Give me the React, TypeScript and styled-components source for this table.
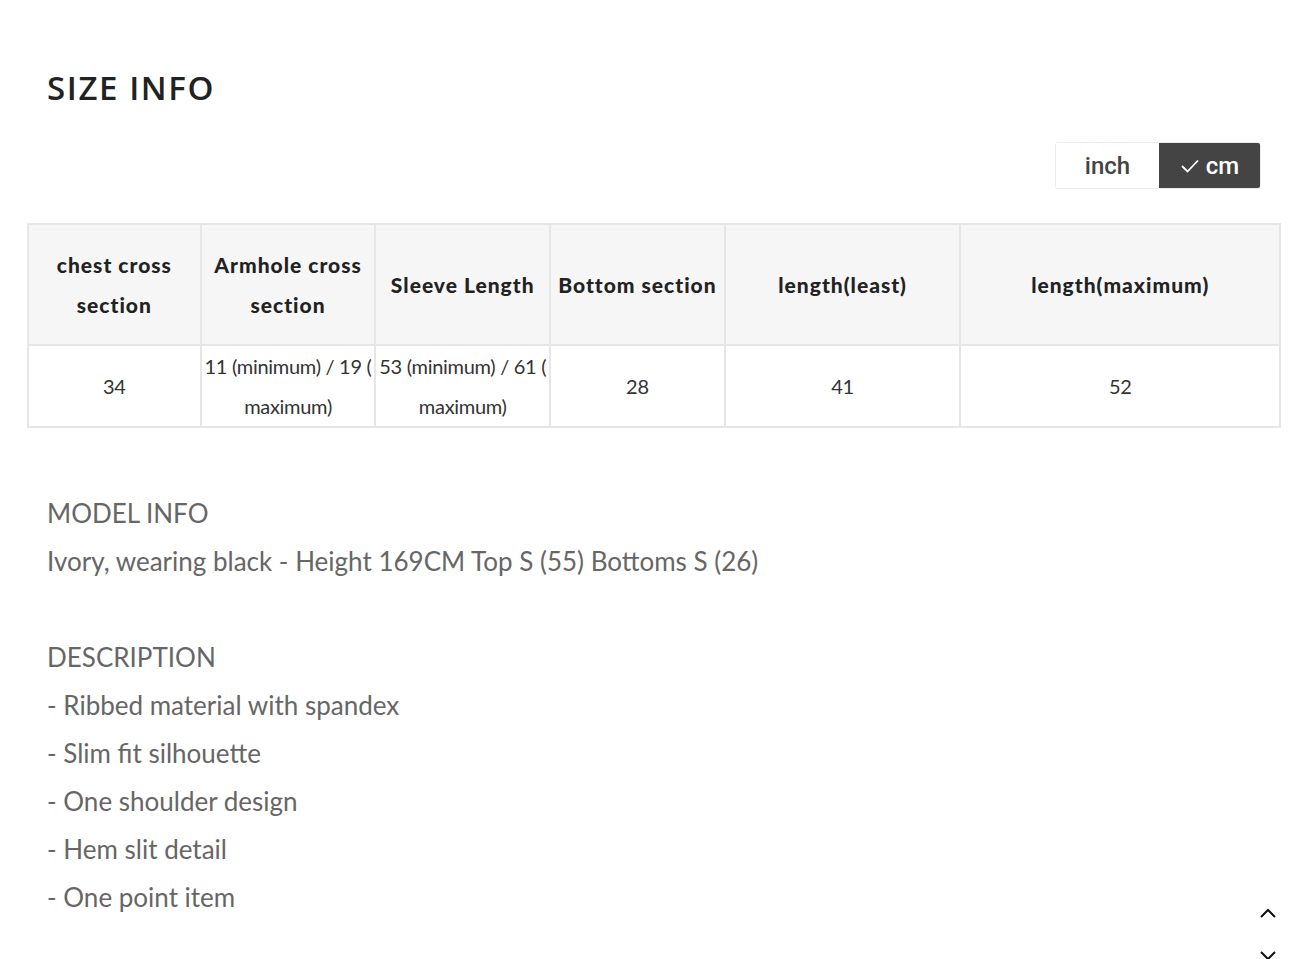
import { useState } from 'react'
import styled, { createGlobalStyle } from 'styled-components'

const GlobalStyle = createGlobalStyle`
  html, body {
    margin: 0;
    padding: 0;
    background: #fff;
  }
  body {
    font-family: Lato, 'Noto Sans', sans-serif;
  }
`

const Page = styled.div`
  padding: 66px 27px 40px 27px;
`

const Title = styled.h2`
  margin: 0 0 0 20px;
  font-family: 'Open Sans', 'Noto Sans', sans-serif;
  font-weight: 600;
  font-size: 33px;
  line-height: 44px;
  letter-spacing: 1.6px;
  color: #222;
`

const UnitBar = styled.div`
  display: flex;
  justify-content: flex-end;
  margin: 32px 20px 34px 0;
`

const UnitGroup = styled.div`
  display: flex;
  border: 1px solid #ececec;
  border-radius: 3px;
  overflow: hidden;
`

const UnitButton = styled.button<{ $active: boolean }>`
  display: flex;
  align-items: center;
  justify-content: center;
  gap: 6px;
  width: ${(p) => (p.$active ? '101px' : '103px')};
  height: 45px;
  border: none;
  padding: 0;
  font-family: Roboto, 'Liberation Sans', sans-serif;
  font-size: 24px;
  font-weight: 500;
  background: ${(p) => (p.$active ? '#444' : '#fff')};
  color: ${(p) => (p.$active ? '#fff' : '#444')};
  cursor: pointer;
`

const Table = styled.table`
  border-collapse: collapse;
  table-layout: fixed;
  border: 2px solid #e6e6e6;
`

const HeadCell = styled.th<{ $w: number }>`
  width: ${(p) => p.$w}px;
  height: 119px;
  padding: 0;
  background: #f6f6f6;
  border: 2px solid #e6e6e6;
  font-family: Lato, sans-serif;
  font-weight: 900;
  font-size: 21px;
  line-height: 40px;
  letter-spacing: 1px;
  color: #222;
  text-align: center;
  vertical-align: middle;
`

const Cell = styled.td`
  height: 78px;
  padding: 0;
  border: 2px solid #e6e6e6;
  font-size: 20px;
  line-height: 40px;
  letter-spacing: -0.3px;
  color: #333;
  text-align: center;
  vertical-align: middle;
  line-break: anywhere;
`

const Info = styled.div`
  margin: 61px 0 0 20px;
  font-size: 26px;
  line-height: 48px;
  color: #666;
`

const Line = styled.p<{ $gap?: boolean }>`
  margin: ${(p) => (p.$gap ? '48px 0 0' : '0')};
`

const ScrollNav = styled.div`
  position: fixed;
  right: 30px;
  top: 905px;
  display: flex;
  flex-direction: column;
  gap: 27px;
`

const ScrollButton = styled.button`
  width: 20px;
  height: 16px;
  padding: 0;
  border: none;
  background: transparent;
  display: flex;
  align-items: center;
  justify-content: center;
  cursor: pointer;
`

const columns = [
  { label: ['chest cross', 'section'], w: 171 },
  { label: ['Armhole cross', 'section'], w: 173 },
  { label: ['Sleeve Length'], w: 173 },
  { label: ['Bottom section'], w: 173 },
  { label: ['length(least)'], w: 234 },
  { label: ['length(maximum)'], w: 318 }
]

const values = ['34', '11 (minimum) / 19 (maximum)', '53 (minimum) / 61 (maximum)', '28', '41', '52']

const description = [
  '- Ribbed material with spandex',
  '- Slim fit silhouette',
  '- One shoulder design',
  '- Hem slit detail',
  '- One point item'
]

const App = () => {
  const [unit, setUnit] = useState<'inch' | 'cm'>('cm')

  return (
    <Page>
      <GlobalStyle />
      <Title>SIZE INFO</Title>
      <UnitBar>
        <UnitGroup>
          <UnitButton $active={unit === 'inch'} onClick={() => setUnit('inch')}>
            {unit === 'inch' && <Check />}
            inch
          </UnitButton>
          <UnitButton $active={unit === 'cm'} onClick={() => setUnit('cm')}>
            {unit === 'cm' && <Check />}
            cm
          </UnitButton>
        </UnitGroup>
      </UnitBar>
      <Table>
        <thead>
          <tr>
            {columns.map((c) => (
              <HeadCell key={c.label.join(' ')} $w={c.w}>
                {c.label.map((l, i) => (
                  <span key={l}>
                    {i > 0 && <br />}
                    {l}
                  </span>
                ))}
              </HeadCell>
            ))}
          </tr>
        </thead>
        <tbody>
          <tr>
            {values.map((v, i) => (
              <Cell key={i}>{v}</Cell>
            ))}
          </tr>
        </tbody>
      </Table>
      <Info>
        <Line>MODEL INFO</Line>
        <Line>Ivory, wearing black - Height 169CM Top S (55) Bottoms S (26)</Line>
        <Line $gap>DESCRIPTION</Line>
        {description.map((d) => (
          <Line key={d}>{d}</Line>
        ))}
      </Info>
      <ScrollNav>
        <ScrollButton aria-label='Scroll to top'>
          <svg width='18' height='10' viewBox='0 0 18 10' fill='none' stroke='#111' strokeWidth='2'>
            <path d='M2 9 L9 2 L16 9' />
          </svg>
        </ScrollButton>
        <ScrollButton aria-label='Scroll to bottom'>
          <svg width='18' height='10' viewBox='0 0 18 10' fill='none' stroke='#111' strokeWidth='2'>
            <path d='M2 1 L9 8 L16 1' />
          </svg>
        </ScrollButton>
      </ScrollNav>
    </Page>
  )
}

const Check = () => (
  <svg width='20' height='16' viewBox='0 0 20 16' fill='none' stroke='currentColor' strokeWidth='1.8'>
    <path d='M2 8 L7.5 13.5 L18 2.5' />
  </svg>
)

export default App
